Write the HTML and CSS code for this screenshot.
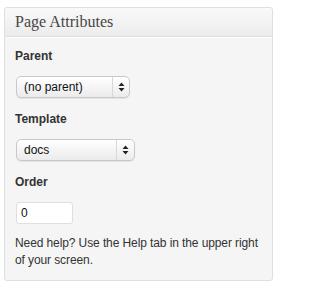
FILE: index.html
```html
<!DOCTYPE html>
<html>
<head>
<meta charset="utf-8">
<link rel="stylesheet" href="styles.css">
</head>
<body>
<div class="postbox">
  <h3 class="hndle">Page Attributes</h3>
  <div class="inside">
    <p class="label">Parent</p>
    <div class="select sel-parent">
      <span class="sel-text">(no parent)</span>
      <span class="sel-arrows">
        <svg width="7" height="10" viewBox="0 0 7 10"><path d="M3.5 0.5 L6.5 4 L0.5 4 Z M0.5 6 L6.5 6 L3.5 9.5 Z" fill="#222"/></svg>
      </span>
    </div>
    <p class="label">Template</p>
    <div class="select sel-template">
      <span class="sel-text">docs</span>
      <span class="sel-arrows">
        <svg width="7" height="10" viewBox="0 0 7 10"><path d="M3.5 0.5 L6.5 4 L0.5 4 Z M0.5 6 L6.5 6 L3.5 9.5 Z" fill="#222"/></svg>
      </span>
    </div>
    <p class="label">Order</p>
    <div class="input">0</div>
    <p class="help">Need help? Use the Help tab in the upper right of your screen.</p>
  </div>
</div>
</body>
</html>
```
FILE: styles.css
```css
html, body {
  margin: 0;
  padding: 0;
  background: #fff;
}
body {
  padding: 7px 10px 0 4px;
  font-family: "Liberation Sans", Arial, sans-serif;
  color: #333;
}
.postbox {
  width: 267px;
  border: 1px solid #dfdfdf;
  border-radius: 3px;
  background: #f5f5f5;
}
.hndle {
  margin: 0;
  height: 28px;
  padding: 0 10px;
  font-family: "Liberation Serif", Georgia, serif;
  font-weight: normal;
  font-size: 16px;
  line-height: 28px;
  color: #464646;
  background: linear-gradient(#f9f9f9, #ececec);
  border-bottom: 1px solid #dfdfdf;
  border-radius: 3px 3px 0 0;
  box-shadow: 0 1px 0 #fff;
}
.inside {
  padding: 12px 10px 11px 10px;
}
.label {
  margin: 0 0 13px;
  font-weight: bold;
  font-size: 12px;
  line-height: 14px;
}
.select {
  display: flex;
  align-items: stretch;
  height: 20px;
  border: 1px solid #c8c8c8;
  border-radius: 5px;
  background: linear-gradient(#ffffff, #ebebeb);
  box-shadow: 0 1px 1px rgba(0,0,0,0.07);
  margin: 0 0 14px 1px;
  font-size: 12px;
}
.sel-parent { width: 112px; }
.sel-template { width: 117px; }
.sel-text {
  flex: 1;
  padding-left: 7px;
  line-height: 20px;
  color: #111;
}
.sel-arrows {
  width: 16px;
  border-left: 1px solid #d8d8d8;
  display: flex;
  align-items: center;
  justify-content: center;
}
.sel-template .sel-arrows { width: 17px; }
.input {
  width: 47px;
  height: 20px;
  margin: 0 0 11px 1px;
  padding: 0 4px;
  border: 1px solid #dfdfdf;
  border-radius: 3px;
  background: #fff;
  font-size: 12px;
  line-height: 20px;
  color: #111;
}
.help {
  margin: 0;
  font-size: 12px;
  line-height: 17px;
  letter-spacing: -0.1px;
}
```
